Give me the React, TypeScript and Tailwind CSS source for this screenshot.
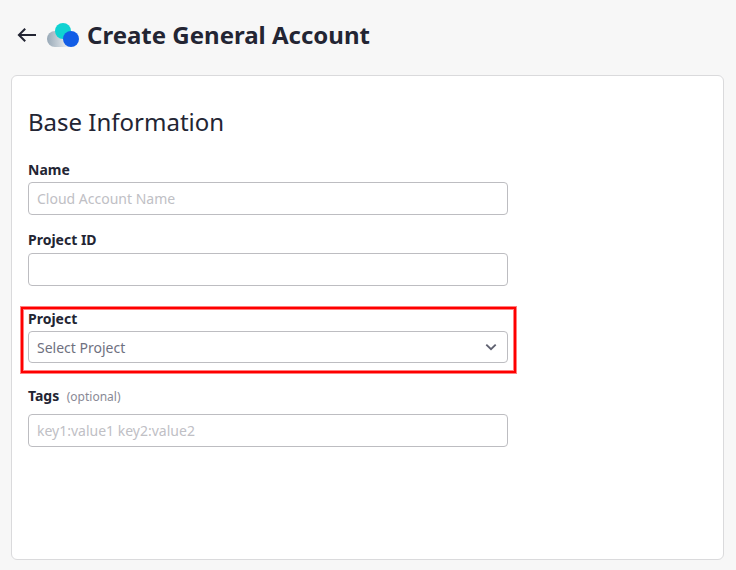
import React from "react";

const inputClass =
  "block h-[33px] w-[480px] rounded-[4px] border border-[#bdbdc1] bg-white px-2 text-[14px] leading-[21px] text-[#232533] outline-none placeholder:text-[#c0c0c5]";

function Logo() {
  return (
    <svg className="ml-[10px] h-8 w-8 shrink-0" viewBox="0 0 32 32" fill="none">
      <defs>
        <linearGradient id="cloud" x1="0" y1="20" x2="20" y2="20" gradientUnits="userSpaceOnUse">
          <stop stopColor="#98a9b7" />
          <stop offset="1" stopColor="#e6eaee" />
        </linearGradient>
      </defs>
      <rect x="0" y="12" width="30" height="16" rx="8" fill="url(#cloud)" />
      <circle cx="16" cy="12" r="8" fill="#10d2d2" />
      <circle cx="24" cy="20" r="8" fill="#125de6" />
    </svg>
  );
}

export default function App() {
  return (
    <div className="h-[570px] w-[736px] overflow-hidden bg-[#f7f7f7] font-['Noto_Sans',sans-serif] text-[#232533]">
      <header className="flex h-[75px] items-start pl-[17px] pt-[19px]">
        <svg className="mt-[6px] h-5 w-5 shrink-0" viewBox="0 0 20 20" fill="none" stroke="#232533" strokeWidth="2">
          <path d="M19 10H2M8.2 3.7L1.9 10L8.2 16.3" />
        </svg>
        <Logo />
        <h1 className="ml-[8px] text-[24px] font-bold leading-[32px]">Create General Account</h1>
      </header>
      <main className="ml-[11px] h-[485px] w-[713px] rounded-[6px] border border-[#dadadc] bg-white pl-4 pt-[30px]">
        <h2 className="text-[24px] leading-[32px]">Base Information</h2>
        <label className="mt-[22px] block text-[14px] font-bold leading-[20px]">Name</label>
        <input className={`${inputClass} mt-[2px]`} placeholder="Cloud Account Name" />
        <label className="mt-[15px] block text-[14px] font-bold leading-[20px]">Project ID</label>
        <input className={`${inputClass} mt-[3px]`} />
        <section className="-ml-2 mt-5 h-[68px] w-[497px] border-[4px] border-[#ff8080] pl-1 outline-2 -outline-offset-3 outline-[#ff0000]">
          <label className="-mt-px block text-[14px] font-bold leading-[20px]">Project</label>
          <button className="mt-[2px] flex h-8 w-[480px] items-center justify-between rounded-[4px] border border-[#bdbdc1] px-2 text-[14px] text-[#6f7180]">
            <span>Select Project</span>
            <svg className="h-4 w-4" viewBox="0 0 16 16" fill="none" stroke="#5f6170" strokeWidth="1.9">
              <path d="M3.3 5.6L8 10.1L12.7 5.6" />
            </svg>
          </button>
        </section>
        <label className="mt-3 block text-[14px] font-bold leading-[20px]">
          Tags<span className="ml-[7.5px] text-[12px] font-normal text-[#898995]">(optional)</span>
        </label>
        <input className={`${inputClass} mt-[7px]`} placeholder="key1:value1 key2:value2" />
      </main>
    </div>
  );
}
